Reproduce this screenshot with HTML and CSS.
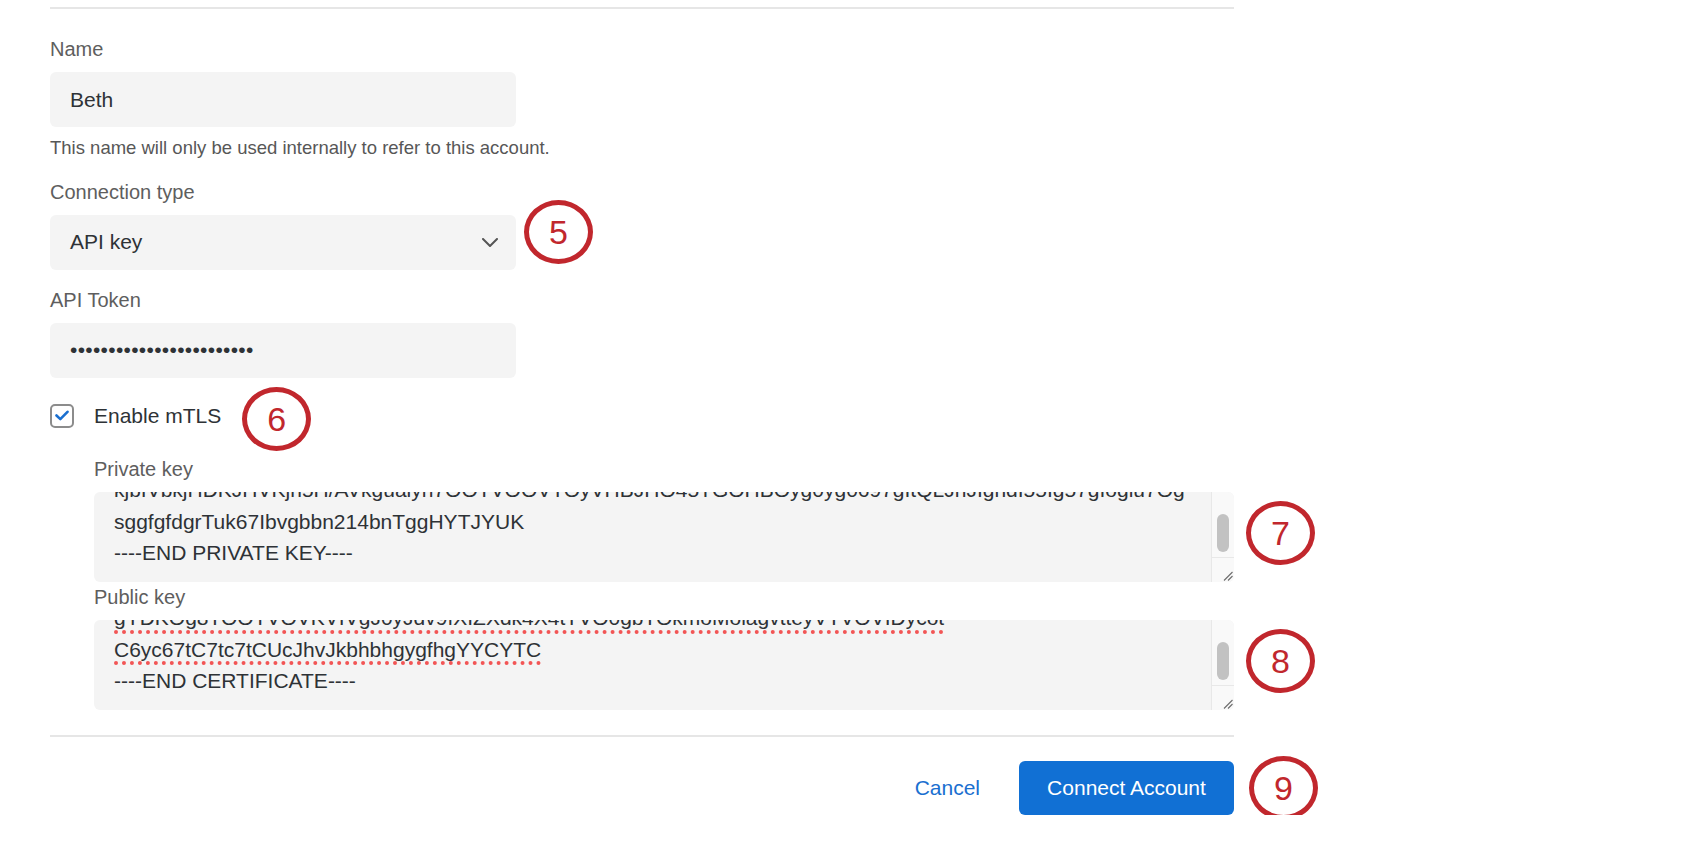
FILE: index.html
```html
<!DOCTYPE html>
<html lang="en">
<head>
    <meta charset="UTF-8">
    <meta name="viewport" content="width=device-width, initial-scale=1.0">
    <title>Connect Account</title>
    <link rel="stylesheet" href="styles.css">
</head>
<body>
    <form class="account-form">
        <div class="rule"></div>

        <div class="field field-first">
            <label class="field-label" for="accountName">Name</label>
            <input class="text-input" id="accountName" type="text" value="Beth">
            <div class="help">This name will only be used internally to refer to this account.</div>
        </div>

        <div class="field field-after-help">
            <div class="field-label">Connection type</div>
            <div class="select-box">
                <span>API key</span>
                <svg class="chevron" width="16" height="9" viewBox="0 0 16 9">
                    <path d="M1 1l7 7 7-7" fill="none" stroke="#555" stroke-width="2" stroke-linecap="round" stroke-linejoin="round"/>
                </svg>
                <span class="callout callout-select">5</span>
            </div>
        </div>

        <div class="field">
            <label class="field-label" for="apiToken">API Token</label>
            <input class="text-input" id="apiToken" type="password" value="xxxxxxxxxxxxxxxxxxxxxxxx">
        </div>

        <div class="check-row">
            <span class="checkbox">
                <svg width="14" height="11" viewBox="0 0 14 11">
                    <path d="M1.5 5.5l3.8 3.6L12.5 1.8" fill="none" stroke="#1a6fd0" stroke-width="2.6" stroke-linecap="round" stroke-linejoin="round"/>
                </svg>
            </span>
            <span class="check-label">Enable mTLS<span class="callout callout-check">6</span></span>
        </div>

        <div class="keys">
            <div class="key-label key-label-first">Private key</div>
            <div class="keybox">
                <div class="keybox-text">
                    <div>kjbIVbkjHDKJHVKjh5H/AVkguaiyh7OOTVOOVTOyVHBJHO45TGOHBOyg0yg0697gItQLJhJIghdI55Ig57gIoglu7Og</div>
                    <div>sggfgfdgrTuk67Ibvgbbn214bnTggHYTJYUK</div>
                    <div>----END PRIVATE KEY----</div>
                </div>
                <div class="keybox-bar">
                    <div class="bar-track"><div class="bar-thumb"></div></div>
                    <div class="bar-corner">
                        <svg width="10" height="10" viewBox="0 0 10 10">
                            <path d="M1 9.5L9.5 1M5 9.5L9.5 5" stroke="#6e6e6e" stroke-width="1.1"/>
                        </svg>
                    </div>
                </div>
                <span class="callout callout-key">7</span>
            </div>

            <div class="key-label">Public key</div>
            <div class="keybox">
                <div class="keybox-text">
                    <div><span class="misspelled">gYDKOg8TOOTVOVKVIVgJ0yJdv9fXIZXdk4X4tTVO0gbTOkmoMolagvtteyVTVOVIDycot</span></div>
                    <div><span class="misspelled">C6yc67tC7tc7tCUcJhvJkbhbhgygfhgYYCYTC</span></div>
                    <div>----END CERTIFICATE----</div>
                </div>
                <div class="keybox-bar">
                    <div class="bar-track"><div class="bar-thumb"></div></div>
                    <div class="bar-corner">
                        <svg width="10" height="10" viewBox="0 0 10 10">
                            <path d="M1 9.5L9.5 1M5 9.5L9.5 5" stroke="#6e6e6e" stroke-width="1.1"/>
                        </svg>
                    </div>
                </div>
                <span class="callout callout-key">8</span>
            </div>
        </div>

        <div class="rule rule-bottom"></div>

        <div class="actions">
            <button type="button" class="cancel-btn">Cancel</button>
            <button type="submit" class="connect-btn">Connect Account<span class="callout callout-btn">9</span></button>
        </div>
    </form>
</body>
</html>
```

FILE: styles.css
```css
body {
    margin: 0;
    padding: 0;
    background: #fff;
    font-family: 'Liberation Sans', Arial, sans-serif;
    color: #2e3236;
}
.account-form {
    width: 1184px;
    margin-left: 50px;
    padding-top: 7px;
}
.rule {
    height: 2px;
    background: #e6e6e6;
}
.rule-bottom {
    margin-top: 25px;
}
.field {
    margin-top: 18px;
}
.field-first {
    margin-top: 28px;
}
.field-after-help {
    margin-top: 21px;
}
.field-label {
    display: block;
    font-size: 20px;
    line-height: 24px;
    color: #5e5e5e;
    margin-bottom: 11px;
}
.text-input,
.select-box {
    box-sizing: border-box;
    width: 466px;
    height: 55px;
    padding: 0 20px;
    border: none;
    border-radius: 6px;
    background: #f4f4f4;
    font-family: 'Liberation Sans', Arial, sans-serif;
    font-size: 21px;
    color: #2e3236;
    outline: none;
}
.text-input[type="password"] {
    letter-spacing: 0.3px;
}
.select-box {
    position: relative;
    display: flex;
    align-items: center;
    justify-content: space-between;
    padding-right: 18px;
}
.chevron {
    margin-top: 1px;
}
.help {
    margin-top: 9.5px;
    font-size: 18.5px;
    line-height: 22px;
    color: #575757;
}
.check-row {
    display: flex;
    align-items: center;
    margin-top: 26px;
    height: 24px;
}
.checkbox {
    box-sizing: border-box;
    width: 24px;
    height: 24px;
    border: 2px solid #8c8c8c;
    border-radius: 5px;
    background: #fff;
    display: flex;
    align-items: center;
    justify-content: center;
}
.check-label {
    position: relative;
    margin-left: 20px;
    font-size: 21px;
}
.keys {
    padding-left: 44px;
}
.key-label {
    font-size: 20px;
    line-height: 24px;
    color: #5e5e5e;
    margin-top: 3px;
    margin-bottom: 11px;
}
.key-label-first {
    margin-top: 29px;
}
.keybox {
    position: relative;
    display: flex;
    height: 90px;
    border-radius: 6px;
    background: #f4f4f4;
}
.keybox-text {
    flex: 1;
    min-width: 0;
    display: flex;
    flex-direction: column;
    justify-content: flex-end;
    padding: 0 20px 13px;
    overflow: hidden;
    white-space: nowrap;
    font-size: 21px;
    line-height: 31.5px;
    color: #2e3236;
}
.misspelled {
    text-decoration: underline dotted #f25555;
    text-decoration-thickness: 3.5px;
    text-underline-offset: 5px;
}
.keybox-bar {
    width: 22px;
    display: flex;
    flex-direction: column;
    background: #f9f9f9;
    border-left: 1px solid #e8e8e8;
    border-radius: 0 6px 6px 0;
}
.bar-track {
    flex: 1;
    padding-top: 22px;
}
.bar-thumb {
    width: 12px;
    height: 38px;
    margin: 0 auto;
    border-radius: 6px;
    background: #c2c2c2;
}
.bar-corner {
    height: 23px;
    border-top: 1px solid #e8e8e8;
    display: flex;
    align-items: flex-end;
    justify-content: flex-end;
    padding: 0 1px 1px 0;
}
.actions {
    display: flex;
    justify-content: flex-end;
    align-items: center;
    margin-top: 24px;
}
.cancel-btn {
    border: none;
    background: none;
    padding: 0;
    margin-right: 39px;
    font-family: 'Liberation Sans', Arial, sans-serif;
    font-size: 21px;
    color: #1a6fd0;
    cursor: pointer;
}
.connect-btn {
    position: relative;
    width: 215px;
    height: 54px;
    border: none;
    border-radius: 6px;
    background: #1170d4;
    color: #fff;
    font-family: 'Liberation Sans', Arial, sans-serif;
    font-size: 21px;
    cursor: pointer;
}

/* numbered red rings beside the fields */
.callout {
    position: absolute;
    top: 50%;
    box-sizing: border-box;
    width: 69px;
    height: 64px;
    margin-top: -32px;
    border: 5px solid #c1272d;
    border-radius: 50%;
    background: #fff;
    display: flex;
    align-items: center;
    justify-content: center;
    font-family: 'Liberation Sans', Arial, sans-serif;
    font-size: 34px;
    line-height: 1;
    color: #c1272d;
}
.callout-select {
    left: calc(100% + 8px);
    margin-top: -42px;
}
.callout-check {
    left: calc(100% + 21px);
    margin-top: -29px;
}
.callout-key {
    left: calc(100% + 12px);
    margin-top: -36px;
}
.callout-btn {
    left: calc(100% + 15px);
}
```
